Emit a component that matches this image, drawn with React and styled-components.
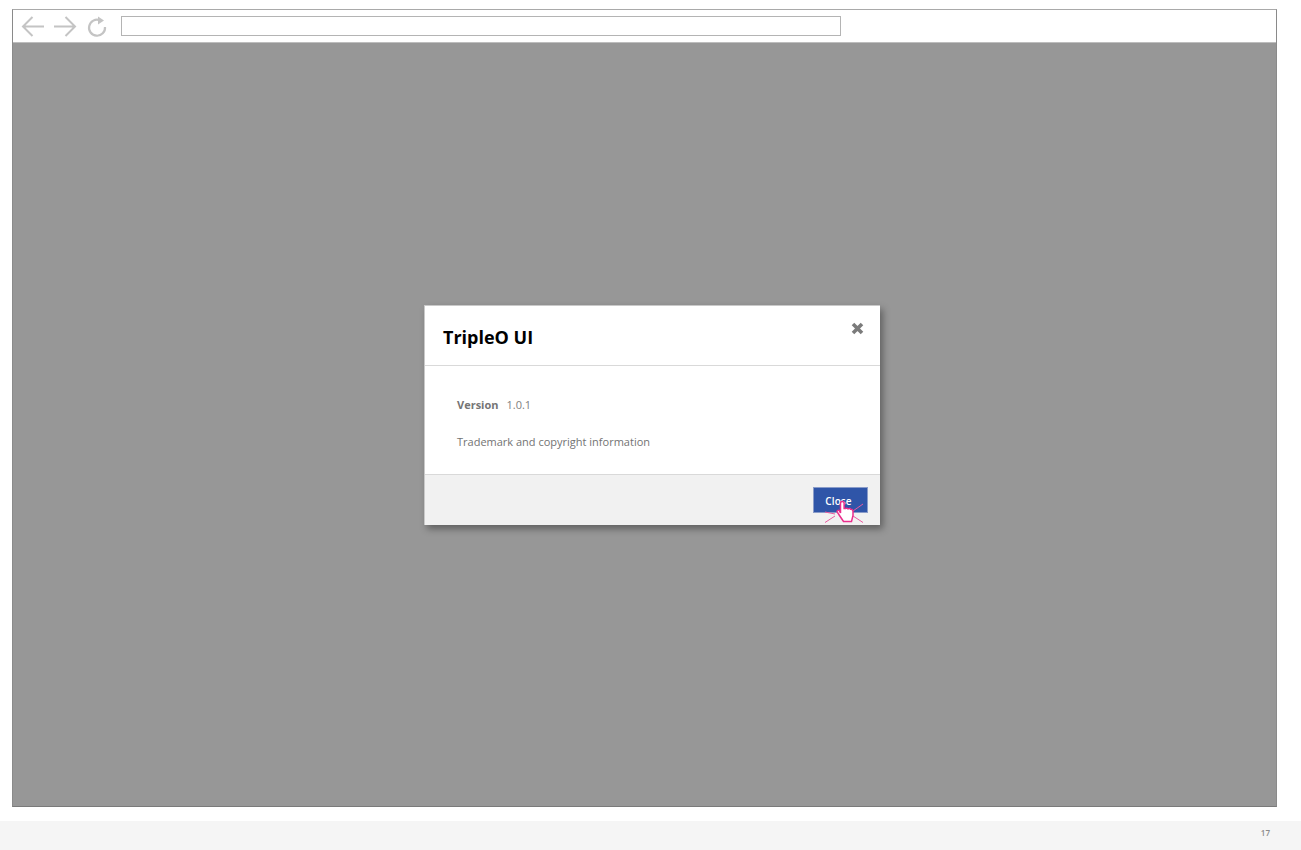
import styled, { createGlobalStyle } from "styled-components";

const GlobalStyle = createGlobalStyle`
  html, body {
    margin: 0;
    padding: 0;
    background: #fff;
    font-family: "Open Sans", "Liberation Sans", sans-serif;
  }
`;

const Page = styled.div`
  width: 1301px;
  height: 850px;
  display: flex;
  flex-direction: column;
  overflow: hidden;
`;

const BrowserFrame = styled.div`
  width: 1265px;
  height: 798px;
  box-sizing: border-box;
  margin: 9px 0 0 12px;
  border: 1px solid #a9a9a9;
  border-bottom-color: #7a7a7a;
  border-left-color: #8a8a8a;
  border-right-color: #8a8a8a;
  display: flex;
  flex-direction: column;
`;

const Toolbar = styled.div`
  height: 32px;
  flex: none;
  display: flex;
  align-items: center;
  padding-left: 8px;
  background: #fff;
  border-bottom: 1px solid #bdbdbd;
`;

const NavIcon = styled.svg`
  width: 24px;
  height: 24px;
  margin-right: ${(p) => p.$gap}px;
  flex: none;
  fill: none;
  stroke: #c4c4c4;
  stroke-width: 2;
`;

const AddressBar = styled.div`
  width: 720px;
  height: 20px;
  box-sizing: border-box;
  border: 1px solid #b4b4b4;
  margin-left: 1px;
  background: #fff;
`;

const Viewport = styled.div`
  flex: 1;
  background: #979797;
  display: flex;
  align-items: center;
  justify-content: center;
  padding: 0 0 19px 15px;
`;

const Modal = styled.div`
  width: 456px;
  height: 220px;
  box-sizing: border-box;
  background: #fff;
  display: flex;
  flex-direction: column;
  border: 1px solid #c9c9c9;
  border-width: 1px 0 0 1px;
  box-shadow: 3px 4px 7px rgba(0, 0, 0, 0.36);
`;

const ModalHeader = styled.div`
  height: 60px;
  flex: none;
  position: relative;
  display: flex;
  align-items: center;
  padding: 3px 18px 0;
  box-sizing: border-box;
  border-bottom: 1px solid #d9d9d9;
`;

const Title = styled.h1`
  margin: 0;
  font-size: 18px;
  font-weight: 700;
  color: #000;
`;

const CloseIcon = styled.svg`
  position: absolute;
  top: 16px;
  right: 16px;
  width: 13px;
  height: 13px;
  stroke: #7b7b7b;
  stroke-width: 3.6;
`;

const ModalBody = styled.div`
  flex: 1;
  padding: 31px 32px 0;
  display: flex;
  flex-direction: column;
  gap: 21px;
`;

const InfoRow = styled.div`
  display: flex;
  gap: 8px;
  font-size: 11px;
  line-height: 16px;
  color: #757575;
`;

const Label = styled.span`
  font-weight: 700;
`;

const Value = styled.span`
  font-weight: 400;
  color: ${(p) => (p.$muted ? "#808080" : "#737373")};
`;

const ModalFooter = styled.div`
  height: 51px;
  flex: none;
  box-sizing: border-box;
  background: #f1f1f1;
  border-top: 1px solid #d9d9d9;
  display: flex;
  justify-content: flex-end;
  align-items: flex-start;
  padding: 12px 12px 0 0;
`;

const CloseButton = styled.button`
  position: relative;
  width: 55px;
  height: 26px;
  padding: 2px 4px 0 0;
  border: 1px solid #8a9cc9;
  background: #2f55a8;
  color: #fff;
  font-family: inherit;
  font-size: 10px;
  font-weight: 600;
  letter-spacing: 0.1px;
  line-height: 22px;
`;

const Pointer = styled.svg`
  position: absolute;
  left: 10px;
  top: 10px;
  width: 42px;
  height: 26px;
  overflow: visible;
`;

const Footer = styled.div`
  margin-top: 14px;
  height: 29px;
  box-sizing: border-box;
  background: #f5f5f5;
  display: flex;
  align-items: center;
  justify-content: flex-end;
  padding: 0 31px 6px 0;
  font-size: 8px;
  font-weight: 600;
  color: #8a8a8a;
`;

export default function App() {
  return (
    <Page>
      <GlobalStyle />
      <BrowserFrame>
        <Toolbar>
          <NavIcon $gap={8} viewBox="0 0 24 24">
            <path d="M23 12.5H2M11.5 3l-9.5 9.5 9.5 9.5" />
          </NavIcon>
          <NavIcon $gap={8} viewBox="0 0 24 24">
            <path d="M1 12.5h21M12.500 3l9.500 9.500-9.500 9.500" />
          </NavIcon>
          <NavIcon $gap={11} viewBox="0 0 24 24">
            <path d="M15 6.300a8 8 0 1 0 5 6.700" strokeWidth="2.200" />
            <path d="M13 2.500v8l6-4z" fill="#c4c4c4" stroke="none" />
          </NavIcon>
          <AddressBar />
        </Toolbar>
        <Viewport>
          <Modal>
            <ModalHeader>
              <Title>TripleO UI</Title>
              <CloseIcon viewBox="0 0 13 13">
                <path d="M2 2l9 9M11 2l-9 9" />
              </CloseIcon>
            </ModalHeader>
            <ModalBody>
              <InfoRow>
                <Label>Version</Label>
                <Value $muted>1.0.1</Value>
              </InfoRow>
              <InfoRow>
                <Value>Trademark and copyright information</Value>
              </InfoRow>
            </ModalBody>
            <ModalFooter>
              <CloseButton>
                Close
                <Pointer viewBox="0 0 42 26">
                  <path
                    d="M1 24.500l10-6.500M1 14l10 2M39 6l-10 7M39 24.500l-10-6.500"
                    stroke="#ea5a9f"
                    strokeWidth="1"
                    fill="none"
                  />
                  <path
                    d="M16.500 15V5.200a1.800 1.800 0 0 1 3.600 0v5.300h1.600a1.300 1.300 0 0 1 2 .3h1a1.300 1.300 0 0 1 2 .5c1.500 0 2.300.8 2.300 2.200v4l-1.500 6H19.500l-4-6-2.200-3.300c-.8-1.400 1-2.600 2-1.500z"
                    fill="#fff"
                    stroke="#ea2d8c"
                    strokeWidth="1.500"
                  />
                </Pointer>
              </CloseButton>
            </ModalFooter>
          </Modal>
        </Viewport>
      </BrowserFrame>
      <Footer>17</Footer>
    </Page>
  );
}
